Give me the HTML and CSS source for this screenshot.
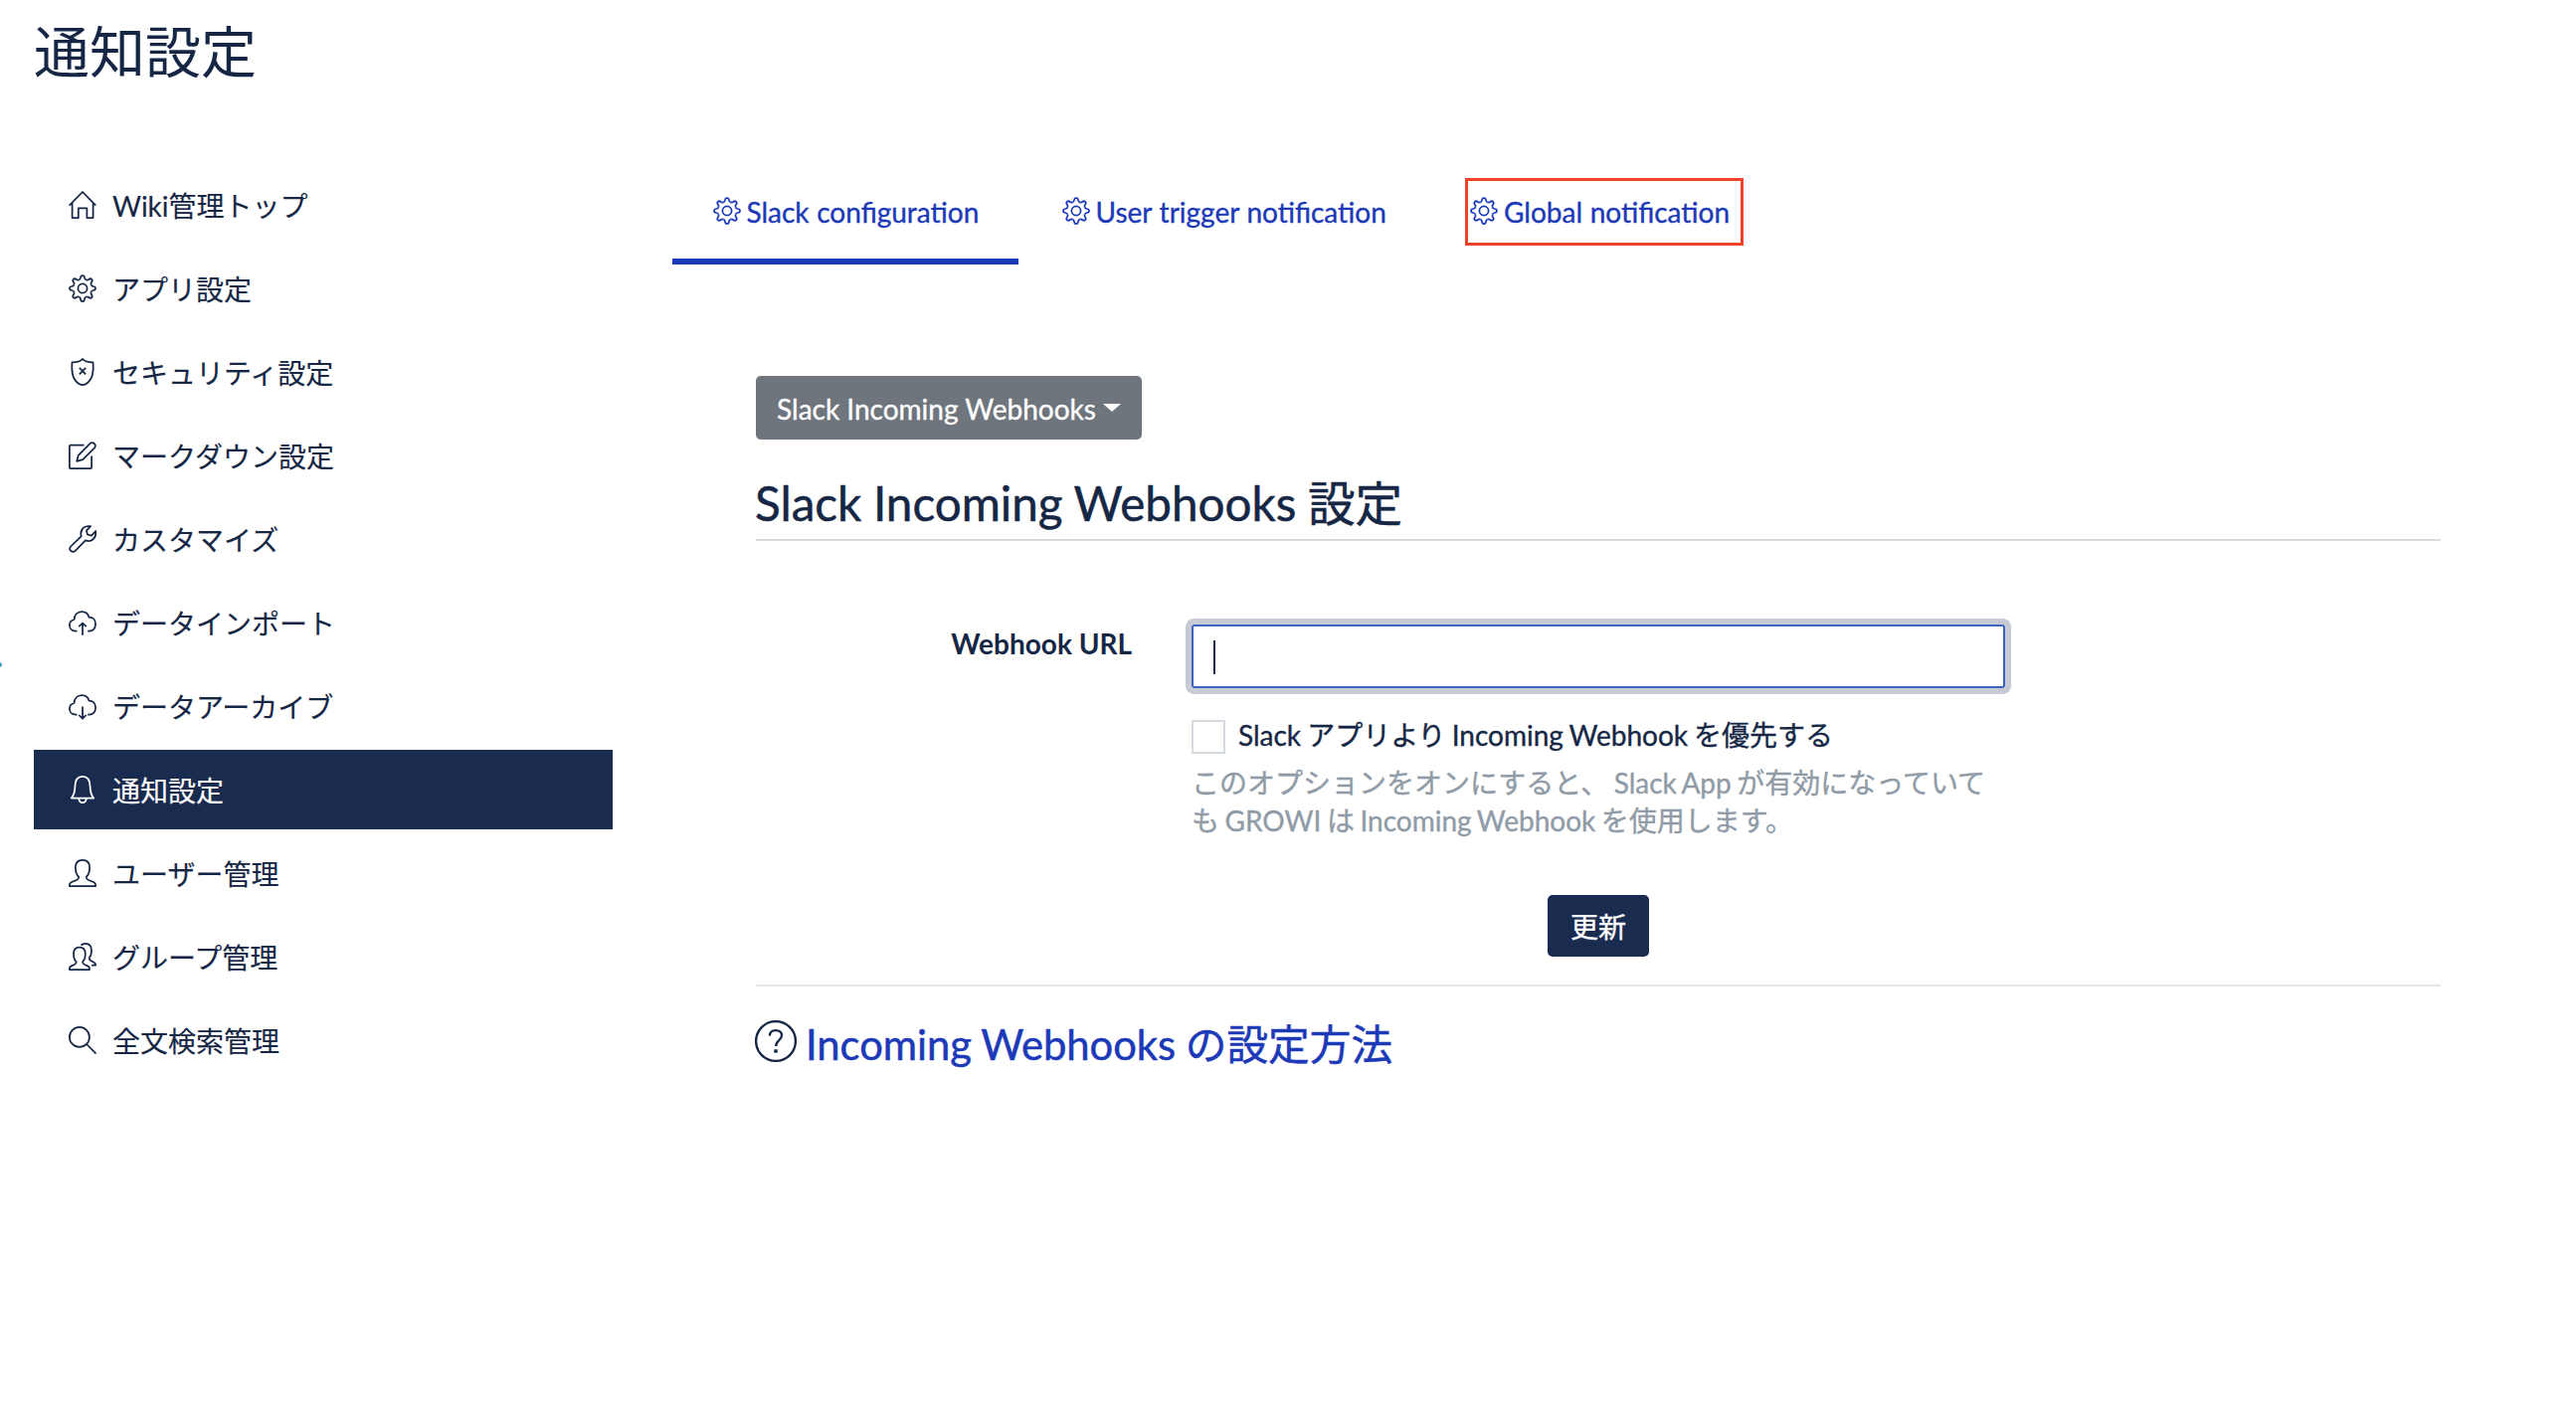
FILE: index.html
```html
<!DOCTYPE html>
<html lang="ja">
<head>
<meta charset="utf-8">
<title>通知設定</title>
<link rel="stylesheet" href="styles.css">
</head>
<body>
<svg class="sprite" aria-hidden="true">
  <defs>
    <path id="tooth" d="M10.44 5.41C11.3 5.05 11.8 4.4 12 3.2 12.2 1.600 12.700 1 14 1S15.800 1.600 16 3.200C16.200 4.400 16.700 5.050 17.560 5.410"/>
  </defs>
  <symbol id="gear" viewBox="0 0 28 28">
    <use href="#tooth"/>
    <use href="#tooth" transform="rotate(45 14 14)"/>
    <use href="#tooth" transform="rotate(90 14 14)"/>
    <use href="#tooth" transform="rotate(135 14 14)"/>
    <use href="#tooth" transform="rotate(180 14 14)"/>
    <use href="#tooth" transform="rotate(225 14 14)"/>
    <use href="#tooth" transform="rotate(270 14 14)"/>
    <use href="#tooth" transform="rotate(315 14 14)"/>
    <circle cx="14" cy="14" r="4.6"/>
  </symbol>
</svg>
<div class="page">
  <span class="edge-dot"></span>
  <h1 class="page-title">通知設定</h1>
  <div class="layout">
    <nav class="side">
      <a class="side-item"><svg class="ico" viewBox="0 0 28 28"><path d="M.7 14.700 14 1l13.300 13.700M3.600 12v15.100h6.200V17.300h8.600v9.800h6.200V12"/></svg><span>Wiki管理トップ</span></a>
      <a class="side-item"><svg class="ico"><use href="#gear"/></svg><span>アプリ設定</span></a>
      <a class="side-item"><svg class="ico" viewBox="0 0 28 28"><path d="M14 1C12.500 3 8.500 4.300 3.500 4.300 3 11 3 16 5.500 20.500 8 25 11.500 27 14 27s6-2 8.500-6.500C25 16 25 11 24.500 4.300 19.500 4.300 15.500 3 14 1zM10.800 9.800l6.400 6.600M17.200 9.800l-6.400 6.600"/></svg><span>セキュリティ設定</span></a>
      <a class="side-item"><svg class="ico" viewBox="0 0 28 28"><path d="M15.500 3.600H2q-1.100 0-1.100 1.100V26q0 1.100 1.100 1.100h20q1.100 0 1.100-1.100V14.500M8.200 19.800l1.600-6L21.700 1.900q2-1.700 4.200.2 1.900 2.200.2 4.200L14.200 18.200z"/></svg><span>マークダウン設定</span></a>
      <a class="side-item"><svg class="ico" viewBox="0 0 28 28"><path d="M22 1.200C16.500.2 12.300 3.500 12.300 8.500q0 1.600.5 2.600L2.200 21.500q-2.100 2.300 0 4.400t4.500 0L17 15.400C22 17.500 28.300 14 27.200 6l-4.200 4.700-4-1.200-1-3.800z"/></svg><span>カスタマイズ</span></a>
      <a class="side-item"><svg class="ico" viewBox="0 0 28 28"><path d="M8.500 22.500H7C3.300 22.500.9 20 .9 16.700c0-3 1.800-5 4.600-5.700C5.800 6.300 8.800 3 13.300 3c3.600 0 6.300 2.200 7.200 5.700 4 0 6.600 3 6.600 6.900 0 4-2.500 6.900-6.400 6.900h-1.500M14 26.800V14.600M10.300 18.200 14 14.500l3.700 3.700"/></svg><span>データインポート</span></a>
      <a class="side-item"><svg class="ico" viewBox="0 0 28 28"><path d="M8.500 22.500H7C3.300 22.500.9 20 .9 16.700c0-3 1.800-5 4.600-5.700C5.800 6.300 8.800 3 13.300 3c3.600 0 6.300 2.200 7.200 5.700 4 0 6.600 3 6.600 6.900 0 4-2.500 6.900-6.400 6.900h-1.500M14 14.400v12.200M10.300 23 14 26.700 17.700 23"/></svg><span>データアーカイブ</span></a>
      <a class="side-item active"><svg class="ico" viewBox="0 0 28 28"><path d="M2.800 22.600C5.800 19 6.300 16.500 6.400 11 6.500 4.500 9.500.9 14 .9s7.500 3.600 7.600 10.100c.1 5.500.6 8 3.600 11.600zM10.200 22.800c.3 2.800 1.800 4.300 3.800 4.300s3.500-1.500 3.800-4.300"/></svg><span>通知設定</span></a>
      <a class="side-item"><svg class="ico" viewBox="0 0 28 28"><path d="M14 .9C9.500.9 6.900 3.800 6.900 8.500c0 4 1.300 7.500 3.400 9.300 0 1.700-.6 2.400-2.300 3.200l-5 2c-1.500.7-2.100 1.500-2.100 2.800v1.300h26.200v-1.300c0-1.300-.6-2.100-2.100-2.800l-5-2c-1.700-.8-2.300-1.500-2.300-3.200 2.100-1.800 3.400-5.300 3.400-9.300C21.100 3.800 18.500.9 14 .9z"/></svg><span>ユーザー管理</span></a>
      <a class="side-item"><svg class="ico" viewBox="0 0 28 28"><path d="M10.900 4.700C7 4.700 5 7.300 5 11.300c0 3.400 1 6.300 2.700 7.900 0 1.500-.5 2.200-1.900 2.800l-3 1.400C1.500 24 .9 24.600.9 25.700v1.400h20v-1.400c0-1.100-.6-1.700-1.900-2.300l-3-1.400c-1.400-.6-1.900-1.300-1.900-2.800 1.700-1.600 2.700-4.500 2.700-7.900 0-4-2-6.600-5.900-6.600zM12.400 2.700C13.500 1.500 15 .9 16.900.9c4 0 6.100 2.800 6.100 6.900 0 3.300-.8 5.900-2.300 7.500 0 1.600.5 2.400 1.900 3l2.500 1.200c1.500.7 2 1.400 2 2.500v.7h-4"/></svg><span>グループ管理</span></a>
      <a class="side-item"><svg class="ico" viewBox="0 0 28 28"><circle cx="10.900" cy="10.900" r="10"/><path d="M18 18l9.500 9.500"/></svg><span>全文検索管理</span></a>
    </nav>
    <main class="main">
      <div class="tabs">
        <a class="tab selected"><svg class="ico"><use href="#gear"/></svg><span>Slack configuration</span></a>
        <a class="tab"><svg class="ico"><use href="#gear"/></svg><span>User trigger notification</span></a>
        <a class="tab marked"><svg class="ico"><use href="#gear"/></svg><span>Global notification</span></a>
      </div>
      <section class="pane">
        <button class="dropdown">Slack Incoming Webhooks<i class="caret"></i></button>
        <h2 class="heading">Slack Incoming Webhooks 設定</h2>
        <div class="form">
          <label class="field-label">Webhook URL</label>
          <div class="field">
            <div class="input"><i class="cursor"></i></div>
            <div class="check"><i class="box"></i><span>Slack アプリより Incoming Webhook を優先する</span></div>
            <p class="help">このオプションをオンにすると、 Slack App が有効になっていて<br>も GROWI は Incoming Webhook を使用します。</p>
          </div>
        </div>
        <button class="submit">更新</button>
        <h3 class="howto"><svg class="help-ico" viewBox="0 0 42 42"><circle cx="21" cy="21" r="19.900"/><path d="M14.800 15.600c.2-3.400 2.500-5.500 6.100-5.500s6.100 2 6.100 5.200c0 2.300-1.200 3.500-3 5.100-1.900 1.600-2.800 2.700-2.800 5.600"/><path class="dot" d="M21 29.300v3.400"/></svg><a>Incoming Webhooks の設定方法</a></h3>
      </section>
    </main>
  </div>
</div>
</body>
</html>
```
FILE: styles.css
```css
*, *::after { box-sizing: border-box; }

body {
  margin: 0;
  background: #fff;
  color: #152745;
  font: 400 28px/40px Lato, "Noto Sans CJK JP", sans-serif;
  -webkit-text-stroke: 0.35px currentColor;
}

.sprite { position: absolute; width: 0; height: 0; }

.page {
  position: relative;
  height: 1436px;
  padding: 18px 136px 0 34px;
  overflow: hidden;
}

.edge-dot {
  position: absolute;
  left: -3px;
  top: 666px;
  width: 5px;
  height: 5px;
  border-radius: 50%;
  background: #4a9fd0;
}

.page-title {
  margin: 0;
  font-size: 56px;
  font-weight: 400;
  line-height: 68px;
  -webkit-text-stroke-width: 0;
}

.layout { display: flex; margin-top: 74px; }

.ico {
  flex: none;
  width: 28px;
  height: 28px;
  fill: none;
  stroke: currentColor;
  stroke-width: 1.75;
  stroke-linejoin: round;
}

/* side navigation */
.side {
  display: flex;
  flex-direction: column;
  gap: 4px;
  width: 582px;
  padding-top: 6px;
  -webkit-text-stroke-width: 0.15px;
}
.side-item {
  display: flex;
  align-items: center;
  gap: 16px;
  height: 80px;
  padding-left: 35px;
}
.side-item span { padding-top: 2px; }
.side-item.active { background: #1a2b50; color: #fff; }

/* tabs */
.main { flex: 1; margin-left: 60px; }
.tabs { display: flex; color: #1c39b8; }
.tab {
  position: relative;
  display: flex;
  align-items: center;
  gap: 5.500px;
  height: 106px;
  padding: 4px 0 6px 44px;
  word-spacing: 0.5px;
}
.tab span { padding-top: 2px; }
.tab:nth-child(2) { width: 410px; }
.tab.selected {
  width: 348px;
  padding: 4px 0 0 41px;
  border-bottom: 6px solid #1c39b8;
}
.tab.marked { gap: 6px; }
.tab.marked::after {
  content: "";
  position: absolute;
  left: 39px;
  top: 19px;
  width: 280px;
  height: 68px;
  border: 3px solid #ee4326;
}

/* pane */
.pane { padding: 112px 0 0 84px; }
.dropdown, .submit {
  display: flex;
  align-items: center;
  justify-content: center;
  border: 0;
  border-radius: 5px;
  color: #fff;
  font: inherit;
}
.dropdown {
  gap: 7px;
  width: 388px;
  height: 64px;
  padding: 2px 0 0;
  background: #6e757d;
}
.caret {
  margin-top: -3px;
  border: 9px solid transparent;
  border-top: 8.500px solid #fff;
  border-bottom: 0;
}
.heading {
  margin: 34px 0 0;
  padding-bottom: 6px;
  border-bottom: 2px solid #d6dbe0;
  font-size: 47.600px;
  font-weight: 400;
  line-height: 60px;
  text-indent: -1px;
  word-spacing: -0.5px;
  -webkit-text-stroke-width: 0.5px;
}
.form { display: flex; gap: 60px; margin-top: 84px; }
.field-label {
  width: 378px;
  line-height: 38px;
  text-align: right;
  font-weight: 700;
  -webkit-text-stroke-width: 0;
}
.field { width: 818px; }
.input {
  display: flex;
  height: 64px;
  padding: 14px 20px;
  border: 2px solid #3b63b9;
  border-radius: 3px;
  box-shadow: 0 0 0 6px #c5cad5;
}
.cursor { width: 2px; height: 34px; background: #152745; }
.check { display: flex; gap: 13px; height: 34px; margin-top: 32px; }
.check span { line-height: 31px; white-space: nowrap; word-spacing: -1.100px; }
.box { width: 34px; height: 34px; border: 2px solid #d6dbe1; }
.help {
  margin: 10px 0 0;
  color: #8f9ba6;
  line-height: 38px;
  white-space: nowrap;
  word-spacing: -1.600px;
}
.submit {
  width: 102px;
  height: 62px;
  margin: 56px 0 0 796px;
  padding: 1px 0 0;
  background: #1a2b50;
}
.howto {
  display: flex;
  gap: 9px;
  margin: 28px 0 0;
  padding-top: 33px;
  border-top: 2px solid #e4e4e5;
  font-size: 41.700px;
  font-weight: 400;
  line-height: 50px;
  word-spacing: -1px;
  -webkit-text-stroke-width: 0.5px;
}
.howto a { color: #1c39b8; white-space: nowrap; }
.help-ico {
  width: 42px;
  height: 42px;
  margin: 1px 0 0 -1px;
  fill: none;
  stroke: currentColor;
  stroke-width: 2.300;
}
.help-ico .dot { stroke-width: 3.500; }
```
